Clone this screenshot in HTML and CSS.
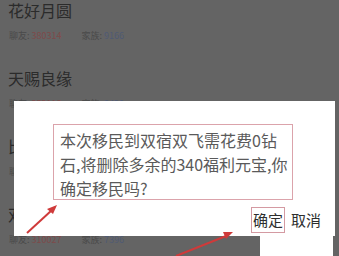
FILE: index.html
```html
<!DOCTYPE html>
<html lang="zh-CN">
<head>
    <meta charset="UTF-8">
    <meta name="viewport" content="width=device-width, initial-scale=1.0">
    <title>移民</title>
    <link rel="stylesheet" href="styles.css">
</head>
<body>
    <div class="list">
        <div class="item">
            <h2 class="item-title">花好月圆</h2>
            <div class="item-meta">
                <span class="label">聊友:</span> <span class="num-red">380314</span>
                <span class="label gap">家族:</span> <span class="num-blue">9166</span>
            </div>
        </div>
        <div class="item">
            <h2 class="item-title">天赐良缘</h2>
            <div class="item-meta">
                <span class="label">聊友:</span> <span class="num-red">352118</span>
                <span class="label gap">家族:</span> <span class="num-blue">8420</span>
            </div>
        </div>
        <div class="item">
            <h2 class="item-title">比翼双飞</h2>
            <div class="item-meta">
                <span class="label">聊友:</span> <span class="num-red">330561</span>
                <span class="label gap">家族:</span> <span class="num-blue">7902</span>
            </div>
        </div>
        <div class="item item-last">
            <h2 class="item-title">双宿双飞</h2>
            <div class="item-meta">
                <span class="label">聊友:</span> <span class="num-red">310027</span>
                <span class="label gap">家族:</span> <span class="num-blue">7396</span>
            </div>
        </div>
    </div>

    <!-- confirm dialog -->
    <div class="dialog">
        <div class="dialog-msg">本次移民到双宿双飞需花费0钻石,将删除多余的340福利元宝,你确定移民吗?</div>
        <div class="dialog-actions">
            <span class="btn btn-marked">确定</span>
            <span class="btn">取消</span>
        </div>
    </div>
    <div class="dialog-tail"></div>

    <svg class="arrows" width="339" height="256" viewBox="0 0 339 256">
        <line x1="27" y1="233" x2="52" y2="210" stroke="#cf3a3a" stroke-width="2"/>
        <polygon points="57,205 47,209 53,214" fill="#cf3a3a"/>
        <line x1="176" y1="256" x2="226" y2="236" stroke="#cf3a3a" stroke-width="2"/>
        <polygon points="233,232 223,232 226,239" fill="#cf3a3a"/>
    </svg>
</body>
</html>
```

FILE: styles.css
```css
html {
    overflow: hidden;
}

body {
    margin: 0;
    width: 339px;
    height: 256px;
    overflow: hidden;
    background: #646464;
    font-family: "Noto Sans CJK SC", "Noto Sans", sans-serif;
    position: relative;
}

.list {
    padding: 0 8px;
}

.item {
    height: 68px;
}

.item-last {
    height: auto;
}

.item-title {
    margin: 0;
    font-size: 16px;
    line-height: 20px;
    font-weight: normal;
    color: #2b2b2b;
}

.item-meta {
    margin-top: 10px;
    padding-left: 1px;
    font-size: 9px;
    line-height: 12px;
    color: #4a4a4a;
}

.label.gap {
    margin-left: 18px;
}

.num-red {
    color: #7e4a4a;
}

.num-blue {
    color: #4f5a74;
}

.dialog {
    position: absolute;
    left: 14px;
    top: 101px;
    width: 321px;
    height: 135px;
    background: #fff;
    box-sizing: border-box;
    padding: 23px 0 0 39px;
}

.dialog-tail {
    position: absolute;
    left: 260px;
    top: 236px;
    width: 73px;
    height: 20px;
    background: #fff;
}

.dialog-msg {
    width: 240px;
    height: 76px;
    box-sizing: border-box;
    border: 1px solid #dba3ab;
    padding: 3px 0 0 6px;
    font-size: 16px;
    line-height: 24px;
    color: #5a5a5a;
    word-break: break-all;
    line-break: anywhere;
}

.dialog-actions {
    display: flex;
    gap: 4px;
    margin-top: 7px;
    padding-left: 198px;
}

.btn {
    font-size: 15px;
    line-height: 24px;
    color: #2e2e2e;
    padding: 0 1px;
    border: 1px solid transparent;
}

.btn-marked {
    border-color: #d49aa2;
}

.arrows {
    position: absolute;
    left: 0;
    top: 0;
}
```
